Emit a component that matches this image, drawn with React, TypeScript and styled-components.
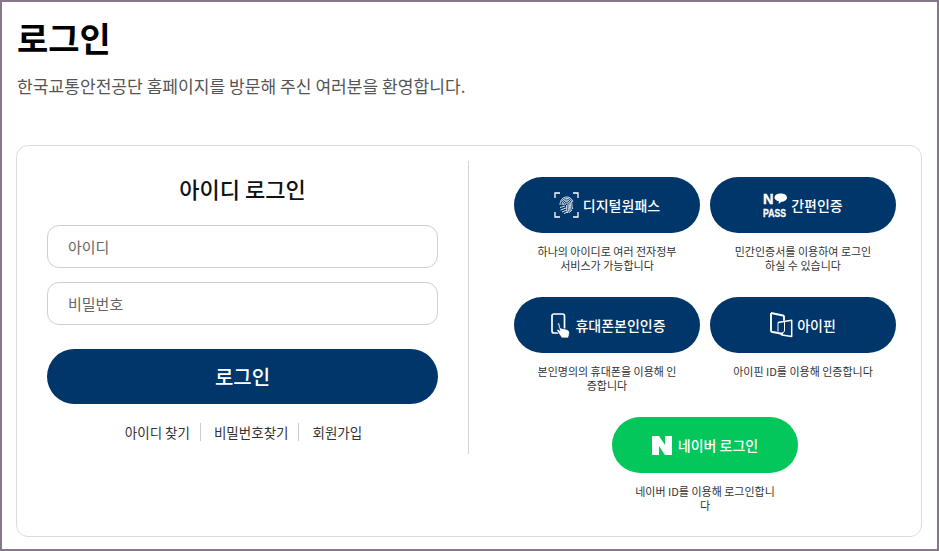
import React from "react";
import styled, { createGlobalStyle } from "styled-components";

const Global = createGlobalStyle`
  html, body { margin: 0; padding: 0; background: #fff; }
  * { box-sizing: border-box; }
  body { font-family: "Noto Sans CJK KR", "Noto Sans", sans-serif; }
`;

const Frame = styled.div`
  width: 939px; height: 551px; overflow: hidden;
  border: 2px solid #857889;
  padding: 0 15px 0 14px;
  background: #fff;
`;
const Title = styled.h1`
  margin: 12px 0 0; font-size: 34px; line-height: 47px; font-weight: 700; color: #000; letter-spacing: 0;
  padding-left: 1px;
`;
const Lead = styled.p`
  margin: 13px 0 0; padding-left: 1px; font-size: 17.1px; line-height: 24px; color: #555; font-weight: 400;
`;
const Card = styled.div`
  margin-top: 47px; height: 392px; border: 1px solid #dcdcdc; border-radius: 12px;
  padding-top: 15px; display: flex; align-items: flex-start; background: #fff;
`;
const LoginPane = styled.div`
  width: 452px; height: 293px; padding: 0 30px; border-right: 1px solid #d5d5d5;
`;
const LoginHead = styled.h2`
  margin: 0; text-align: center; font-size: 22px; line-height: 30px; padding-top: 12px; height: 64px; font-weight: 500; color: #111;
`;
const Field = styled.input`
  display: block; width: 100%; height: 43px; border: 1px solid #cfcfcf; border-radius: 12px;
  padding: 0 20px; font: 400 15px "Noto Sans CJK KR", sans-serif; margin-bottom: 14px; background: #fff; color: #333;
  &::placeholder { color: #666; opacity: 1; }
`;
const Submit = styled.button`
  display: block; width: 100%; height: 55px; margin-top: 24px; border: 0; border-radius: 28px;
  background: #003669; color: #fff; font: 500 20px "Noto Sans CJK KR", sans-serif;
`;
const Links = styled.ul`
  list-style: none; margin: 19px 0 0; padding: 0 0 0 2px; display: flex; justify-content: center; align-items: center;
`;
const LinkItem = styled.li`
  font-size: 13.5px; line-height: 18px; color: #333;
  & + & { margin-left: 10px; padding-left: 13px; border-left: 1px solid #ccc; }
`;
const AuthPane = styled.div`
  flex: 1; padding: 16px 0 0 20px; display: flex; flex-wrap: wrap; justify-content: center; align-content: flex-start;
`;
const AuthItem = styled.div`
  width: 186px; margin: 0 5px; height: 120px; text-align: center;
`;
const AuthButton = styled.button<{ $naver?: boolean }>`
  width: 186px; height: 56px; border: 0; border-radius: 28px; padding: 0;
  background: ${(p) => (p.$naver ? "#03c75a" : "#003669")}; color: #fff;
  display: flex; align-items: center; justify-content: center; gap: 4px;
  font: 500 14px "Noto Sans CJK KR", sans-serif;
`;
const AuthDesc = styled.p`
  margin: 11px auto 0; width: 142px; font-size: 11px; line-height: 14px; color: #333; word-break: break-all;
`;

const FingerIcon = () => (
  <svg width="25" height="26" viewBox="0 0 25 26" fill="none" stroke="#fff">
    <path d="M6 1H1v5M19 1h5v5M1 20v5h5M24 20v5h-5" strokeWidth="1.3" />
    <g strokeWidth="0.85">
      <path d="M6 13c0-5 3-8 7-8 3 0 5 2 6 5" />
      <path d="M7.5 9.5c1.500-2 3-3 5.500-3 3 0 4.500 2 4.800 5 .2 2.500.4 4 1 5.500" />
      <path d="M8 13c0-3 2-5 4.500-5s4 2 4 4.500c0 3 .5 5 1 6.500" />
      <path d="M9.500 13c0-2 1.300-3.500 3-3.500s2.800 1.300 2.800 3.200c0 3 .5 5.300 1.200 7.300" />
      <path d="M11 13c0-1 .7-2 1.600-2s1.500 1 1.500 2c0 3.500.5 6 1.200 8" />
      <path d="M6 15.500l5-1.500M6.500 18l6-2.200M8 20l5-2M10 21.500l3.700-1.500" />
      <path d="M12.600 13c0 2.500 0 5 .9 8" />
    </g>
  </svg>
);
const PassIcon = () => (
  <svg width="24" height="26" viewBox="0 0 24 26" fill="#fff">
    <text x="0" y="12" fontFamily="Liberation Sans, sans-serif" fontSize="14.5" fontWeight="700" stroke="#fff" strokeWidth="0.4">N</text>
    <path d="M16.500 1.500c4-.3 7.500 1.300 7.500 4s-3 4.300-5.500 4.200L15.500 12l.5-2.600c-3-.6-4.500-2-4.500-3.800 0-2.300 2-3.900 5-4.100z" />
    <text x="0" y="24.500" fontFamily="Liberation Sans, sans-serif" fontSize="11.500" fontWeight="700" stroke="#fff" strokeWidth="0.3" textLength="23" lengthAdjust="spacingAndGlyphs">PASS</text>
  </svg>
);
const PhoneIcon = () => (
  <svg width="19" height="25" viewBox="0 0 19 25" fill="none" style={{ marginLeft: 3, marginRight: 1 }}>
    <rect x="1" y="1" width="12.500" height="19" rx="2" stroke="#fff" strokeWidth="1.700" />
    <path d="M3.500 4.500h7.500v12H3.500z" fill="#003669" />
    <path d="M6.500 10.500c.7-.9 2-.5 2.200.6l.8 3.900 4.500.9c2.500.5 4.500 1.800 4.500 3.600 0 2-.6 3.800-1.100 5.500h-6.700L6 18c-.8-1.100.5-2.300 1.700-1.400l1 .8z" fill="#fff" stroke="#003669" strokeWidth="0.8" />
  </svg>
);
const IpinIcon = () => (
  <svg width="23" height="26" viewBox="0 0 23 26" fill="none" stroke="#fff" strokeWidth="1.900" strokeLinejoin="round">
    <path d="M1 1l12 2.500c.7.200 1 .7 1 1.300v4M13 22L1.500 19.700C1 19.600 1 19 1 18.500V1" />
    <path d="M8 10.500l13.700-2.200V24.600L12 23c-1-.2-1-.8-1-1.500" strokeWidth="1.500" />
    <path d="M8 10.500v9M11.500 21c2.500-.3 3-1.300 3-3V9" strokeWidth="1" />
  </svg>
);
const NaverIcon = () => (
  <svg width="20" height="19" viewBox="0 0 20 19" fill="#fff" style={{ marginRight: 2 }}>
    <path d="M0 0h7l6 9V0h7v19h-7L7 10v9H0z" />
  </svg>
);

const items = [
  { icon: <FingerIcon />, label: "디지털원패스", desc: "하나의 아이디로 여러 전자정부 서비스가 가능합니다" },
  { icon: <PassIcon />, label: "간편인증", desc: "민간인증서를 이용하여 로그인 하실 수 있습니다" },
  { icon: <PhoneIcon />, label: "휴대폰본인인증", desc: "본인명의의 휴대폰을 이용해 인증합니다" },
  { icon: <IpinIcon />, label: "아이핀", desc: "아이핀 ID를 이용해 인증합니다" },
  { icon: <NaverIcon />, label: "네이버 로그인", desc: "네이버 ID를 이용해 로그인합니다", naver: true },
];

export default function App() {
  return (
    <Frame>
      <Global />
      <Title>로그인</Title>
      <Lead>한국교통안전공단 홈페이지를 방문해 주신 여러분을 환영합니다.</Lead>
      <Card>
        <LoginPane>
          <LoginHead>아이디 로그인</LoginHead>
          <Field placeholder="아이디" />
          <Field placeholder="비밀번호" />
          <Submit>로그인</Submit>
          <Links>
            <LinkItem>아이디 찾기</LinkItem>
            <LinkItem>비밀번호찾기</LinkItem>
            <LinkItem>회원가입</LinkItem>
          </Links>
        </LoginPane>
        <AuthPane>
          {items.map((it) => (
            <AuthItem key={it.label}>
              <AuthButton $naver={it.naver}>
                {it.icon}
                {it.label}
              </AuthButton>
              <AuthDesc>{it.desc}</AuthDesc>
            </AuthItem>
          ))}
        </AuthPane>
      </Card>
    </Frame>
  );
}
